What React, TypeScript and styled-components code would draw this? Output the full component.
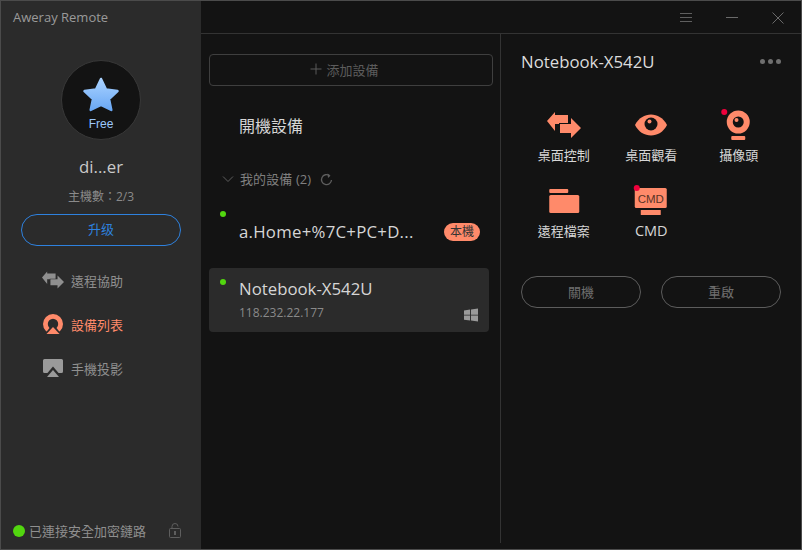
import React from "react";
import styled, { createGlobalStyle } from "styled-components";

const Global = createGlobalStyle`
  html, body { margin: 0; padding: 0; background: #131313; }
  * { box-sizing: border-box; }
  body { font-family: "Open Sans", "Noto Sans CJK TC", sans-serif; }
`;

const Win = styled.div`
  width: 802px; height: 550px; display: flex; overflow: hidden;
  border: 1px solid #4b4b4b; background: #131313;
`;
const Side = styled.aside`
  width: 200px; background: #2b2b2b; display: flex; flex-direction: column; align-items: center; flex: none;
`;
const AppTitle = styled.div`
  align-self: flex-start; margin: 7px 0 0 12px; font-size: 13px; line-height: 18px; color: #9a9a9a;
`;
const Avatar = styled.div`
  width: 80px; height: 80px; border-radius: 50%; margin-top: 34px; background: #131313;
  border: 1px solid #383838; display: flex; flex-direction: column; align-items: center; padding-top: 16px;
`;
const Free = styled.div`
  font-family: "Liberation Sans", sans-serif; font-size: 12px; line-height: 14px; color: #9cc7fb; margin-top: 4px;
`;
const UserName = styled.div`
  margin-top: 16px; font-size: 16.8px; line-height: 22px; color: #c9c9c9;
`;
const Hosts = styled.div`
  margin-top: 11px; font-size: 12px; line-height: 16px; color: #8a8a8a;
`;
const Upgrade = styled.button`
  margin-top: 9px; width: 160px; height: 32px; border-radius: 16px; border: 1px solid #2e81de;
  background: transparent; color: #2e81de; font: inherit; font-size: 13px; padding: 0 0 3px;
`;
const Nav = styled.nav`
  margin-top: 23px; width: 100%; padding-left: 41px; display: flex; flex-direction: column; gap: 22px;
`;
const NavItem = styled.div<{ $active?: boolean }>`
  display: flex; align-items: center; gap: 7px; height: 22px; font-size: 13px;
  color: ${(p) => (p.$active ? "#ff8a6a" : "#8f8f8f")};
`;
const NavIcon = styled.svg`
  width: 22px; height: 22px; flex: none;
`;
const Status = styled.div`
  margin-top: auto; margin-bottom: 8px; width: 100%; padding: 0 19px 0 12px;
  display: flex; align-items: center; font-size: 13px; line-height: 20px; color: #8f8f8f;
`;
const Dot = styled.span<{ $size: number }>`
  width: ${(p) => p.$size}px; height: ${(p) => p.$size}px; border-radius: 50%; background: #52d60f; flex: none; display: block;
`;
const StatusText = styled.span`
  margin-left: 4px; flex: 1;
`;
const Main = styled.div`
  flex: 1; display: flex; flex-direction: column; min-width: 0;
`;
const TitleBar = styled.header`
  height: 33px; flex: none; display: flex; justify-content: flex-end; align-items: center;
  border-bottom: 1px solid #333; padding: 2px 16px 0 0; gap: 32px;
`;
const Columns = styled.div`
  flex: 1; display: flex; min-height: 0; padding-bottom: 6px;
`;
const ListCol = styled.section`
  width: 300px; flex: none; border-right: 1px solid #333; padding: 20px 11px 0 8px;
`;
const AddBtn = styled.div`
  height: 32px; border: 1px solid #3f3f3f; border-radius: 4px; display: flex; align-items: center; justify-content: center;
  gap: 4px; font-size: 13px; color: #5c5c5c; width: 284px; padding: 0 13px 2px 0;
`;
const OnlineLabel = styled.div`
  margin: 28px 0 0 30px; font-size: 16px; line-height: 24px; color: #d6d6d6;
`;
const GroupRow = styled.div`
  margin: 31px 0 0 13px; display: flex; align-items: center; font-size: 13px; line-height: 20px; color: #7f7f7f;
`;
const GroupText = styled.span`
  margin: 0 9px 0 6px; letter-spacing: 0.1px;
`;
const DeviceList = styled.div`
  margin-top: 15px; display: flex; flex-direction: column;
`;
const DeviceRow = styled.div<{ $sel?: boolean }>`
  position: relative; width: 280px; height: 64px; border-radius: 4px; padding: ${(p) => (p.$sel ? "10px" : "17px")} 9px 0 30px;
  background: ${(p) => (p.$sel ? "#2b2b2b" : "transparent")};
`;
const StatusDot = styled(Dot)<{ $top: number }>`
  position: absolute; left: 11px; top: ${(p) => p.$top}px;
`;
const DeviceTop = styled.div`
  display: flex; align-items: center; justify-content: space-between; font-size: 16.8px; line-height: 22px; color: #d6d6d6;
`;
const WideName = styled.span`
  letter-spacing: 0.25px;
`;
const DeviceBottom = styled.div`
  margin-top: 4px; display: flex; align-items: flex-end; justify-content: space-between; font-size: 12px; line-height: 18px; color: #8a8a8a;
`;
const WinLogo = styled.svg`
  width: 14px; height: 14px; margin-right: 2px; display: block;
`;
const Badge = styled.span`
  width: 36px; height: 18px; border-radius: 9px; background: #ff8a6a; color: #333; font-size: 12px; line-height: 18px; text-align: center;
`;
const Detail = styled.section`
  flex: 1; padding: 15px 20px 0 20px; min-width: 0;
`;
const DetailHead = styled.div`
  display: flex; align-items: center; justify-content: space-between; height: 26px; padding-bottom: 2px; font-size: 16.8px; color: #dcdcdc;
`;
const More = styled.div`
  display: flex; gap: 3px;
`;
const MoreDot = styled.span`
  width: 5px; height: 5px; border-radius: 50%; background: #6f6f6f; display: block;
`;
const Tools = styled.div`
  margin-top: 29px; display: grid; grid-template-columns: repeat(3, 87.5px); row-gap: 8px; margin-left: -1px;
`;
const Tool = styled.div`
  width: 87.5px; height: 68px; display: flex; flex-direction: column; align-items: center; color: #d6d6d6; font-size: 13px; line-height: 20px;
`;
const CmdLabel = styled.span`
  font-size: 14.5px;
`;
const ToolIcon = styled.svg`
  width: 40px; height: 40px; display: block; flex: none; margin-bottom: 1px;
`;
const Actions = styled.div`
  margin-top: 28px; display: flex; gap: 20px;
`;
const Action = styled.button`
  width: 120px; height: 32px; border-radius: 16px; border: 1px solid #5c5c5c; background: transparent; color: #6e6e6e;
  font: inherit; font-size: 13px; padding: 0 0 2px;
`;
const CmdText = styled.text`
  font-family: "Liberation Sans", sans-serif; font-size: 11.5px; fill: #5a3325;
`;

const Arrows = ({ color, bg }: { color: string; bg: string }) => (
  <>
    <path d="M3 17 L11 8 V11 H24 V20 H11 V27 Z" fill={color} />
    <path d="M16 20 H27 V14 L37 24 L27 34 V29 H16 Z" fill={color} stroke={bg} strokeWidth="2" paintOrder="stroke" />
  </>
);

export default function App() {
  return (
    <>
      <Global />
      <Win>
        <Side>
          <AppTitle>Aweray Remote</AppTitle>
          <Avatar>
            <svg width="38" height="36" viewBox="0 0 38 36">
              <defs>
                <linearGradient id="star" x1="0" y1="0" x2="0" y2="1">
                  <stop offset="0" stopColor="#a9d2ff" />
                  <stop offset="1" stopColor="#6aa8f5" />
                </linearGradient>
              </defs>
              <path d="M19 2 L24 12.5 L35.5 14 L27 22 L29.3 33 L19 27.8 L8.7 33 L11 22 L2.5 14 L14 12.5 Z" fill="url(#star)" stroke="url(#star)" strokeWidth="2.5" strokeLinejoin="round" />
            </svg>
            <Free>Free</Free>
          </Avatar>
          <UserName>di...er</UserName>
          <Hosts>主機數：2/3</Hosts>
          <Upgrade>升级</Upgrade>
          <Nav>
            <NavItem>
              <NavIcon viewBox="3 4 34 34">
                <Arrows color="#8f8f8f" bg="#2b2b2b" />
              </NavIcon>
              遠程協助
            </NavItem>
            <NavItem $active>
              <NavIcon viewBox="0 0 22 22">
                <circle cx="11" cy="11" r="7.6" fill="none" stroke="#ff8a6a" strokeWidth="4.8" />
                <path d="M2 22 L11 10.5 L20 22 Z" fill="#2b2b2b" />
                <path d="M4.5 21 L11 14 L17.5 21 Z" fill="#ff8a6a" />
              </NavIcon>
              設備列表
            </NavItem>
            <NavItem>
              <NavIcon viewBox="0 0 22 22">
                <path d="M2.5 2 H19.5 a1.5 1.5 0 0 1 1.5 1.5 V14.5 a1.5 1.5 0 0 1 -1.5 1.5 H2.5 a1.5 1.5 0 0 1 -1.5 -1.5 V3.5 A1.5 1.5 0 0 1 2.5 2 Z" fill="#9a9a9a" />
                <path d="M2 20 L11 9.5 L20 20 Z" fill="#2b2b2b" />
                <path d="M5 20 L11 13 L17 20 Z" fill="#9a9a9a" />
              </NavIcon>
              手機投影
            </NavItem>
          </Nav>
          <Status>
            <Dot $size={12} />
            <StatusText>已連接安全加密鏈路</StatusText>
            <svg width="14" height="16" viewBox="0 0 14 16" fill="none" stroke="#5e5e5e" strokeWidth="1">
              <rect x="1.5" y="5.5" width="11" height="9" rx="1" />
              <path d="M4 5.5 V3.5 a3 3 0 0 1 6 0" />
              <rect x="6.5" y="8.5" width="1" height="3" fill="#5e5e5e" />
            </svg>
          </Status>
        </Side>
        <Main>
          <TitleBar>
            <svg width="14" height="12" viewBox="0 0 14 12" stroke="#5f5f5f" strokeWidth="1"><path d="M1 1.5 H13 M1 5.5 H13 M1 9.5 H13" /></svg>
            <svg width="14" height="12" viewBox="0 0 14 12" stroke="#6a6a6a" strokeWidth="1"><path d="M1 5.5 H13" /></svg>
            <svg width="14" height="14" viewBox="0 0 14 14" stroke="#6a6a6a" strokeWidth="1"><path d="M1.5 1.5 L12.5 12.5 M12.5 1.5 L1.5 12.5" /></svg>
          </TitleBar>
          <Columns>
            <ListCol>
              <AddBtn>
                <svg width="12" height="12" viewBox="0 0 12 12" stroke="#5a5a5a" strokeWidth="1"><path d="M6 0.5 V11.5 M0.5 6 H11.5" /></svg>
                添加設備
              </AddBtn>
              <OnlineLabel>開機設備</OnlineLabel>
              <GroupRow>
                <svg width="12" height="8" viewBox="0 0 12 8" fill="none" stroke="#5e5e5e" strokeWidth="1"><path d="M1 1.5 L6 6.5 L11 1.5" /></svg>
                <GroupText>我的設備 (2)</GroupText>
                <svg width="13" height="13" viewBox="0 0 13 13" fill="none" stroke="#5e5e5e" strokeWidth="1.3"><path d="M9.5 2.6 A5 5 0 1 0 11.5 7" /><path d="M7.5 0.5 L10.5 2.8 L8 5" fill="#5e5e5e" stroke="none" /></svg>
              </GroupRow>
              <DeviceList>
                <DeviceRow>
                  <StatusDot $size={6} $top={7} />
                  <DeviceTop>
                    <WideName>a.Home+%7C+PC+D...</WideName>
                    <Badge>本機</Badge>
                  </DeviceTop>
                </DeviceRow>
                <DeviceRow $sel>
                  <StatusDot $size={6} $top={11} />
                  <DeviceTop>Notebook-X542U</DeviceTop>
                  <DeviceBottom>
                    118.232.22.177
                    <WinLogo viewBox="0 0 15 14" fill="#9a9a9a"><path d="M0 2.2 L6.5 1.2 V6.6 H0 Z M7.5 1 L15 0 V6.6 H7.5 Z M0 7.5 H6.5 V12.9 L0 12 Z M7.5 7.5 H15 V14 L7.5 13 Z" /></WinLogo>
                  </DeviceBottom>
                </DeviceRow>
              </DeviceList>
            </ListCol>
            <Detail>
              <DetailHead>
                Notebook-X542U
                <More><MoreDot /><MoreDot /><MoreDot /></More>
              </DetailHead>
              <Tools>
                <Tool>
                  <ToolIcon viewBox="0 0 40 40"><Arrows color="#ff8a6a" bg="#131313" /></ToolIcon>
                  桌面控制
                </Tool>
                <Tool>
                  <ToolIcon viewBox="0 0 40 40">
                    <path d="M4 21 C11 7 29 7 36 21 C29 35 11 35 4 21 Z" fill="#ff8a6a" />
                    <circle cx="20" cy="20" r="6.5" fill="#131313" />
                    <circle cx="18.5" cy="17.5" r="2" fill="#ff8a6a" />
                  </ToolIcon>
                  桌面觀看
                </Tool>
                <Tool>
                  <ToolIcon viewBox="0 0 40 40">
                    <circle cx="5.25" cy="8" r="3" fill="#f0003c" />
                    <circle cx="19.25" cy="18" r="8.5" fill="none" stroke="#ff8a6a" strokeWidth="6" />
                    <circle cx="17.5" cy="16" r="2" fill="#ff8a6a" />
                    <rect x="12.25" y="32" width="14" height="4" rx="1" fill="#ff8a6a" />
                  </ToolIcon>
                  攝像頭
                </Tool>
                <Tool>
                  <ToolIcon viewBox="0 0 40 40">
                    <rect x="5.25" y="9" width="19" height="4" rx="1" fill="#ff8a6a" />
                    <rect x="5.25" y="15" width="30" height="18" rx="1.5" fill="#ff8a6a" />
                  </ToolIcon>
                  遠程檔案
                </Tool>
                <Tool>
                  <ToolIcon viewBox="0 0 40 40">
                    <rect x="3.75" y="8" width="32" height="20" rx="1.5" fill="#ff8a6a" />
                    <CmdText x="19.75" y="22.5" textAnchor="middle">CMD</CmdText>
                    <rect x="9.75" y="30" width="20" height="5" rx="0.5" fill="#ff8a6a" />
                    <circle cx="5.75" cy="8" r="3" fill="#f0003c" />
                  </ToolIcon>
                  <CmdLabel>CMD</CmdLabel>
                </Tool>
              </Tools>
              <Actions>
                <Action>關機</Action>
                <Action>重啟</Action>
              </Actions>
            </Detail>
          </Columns>
        </Main>
      </Win>
    </>
  );
}
